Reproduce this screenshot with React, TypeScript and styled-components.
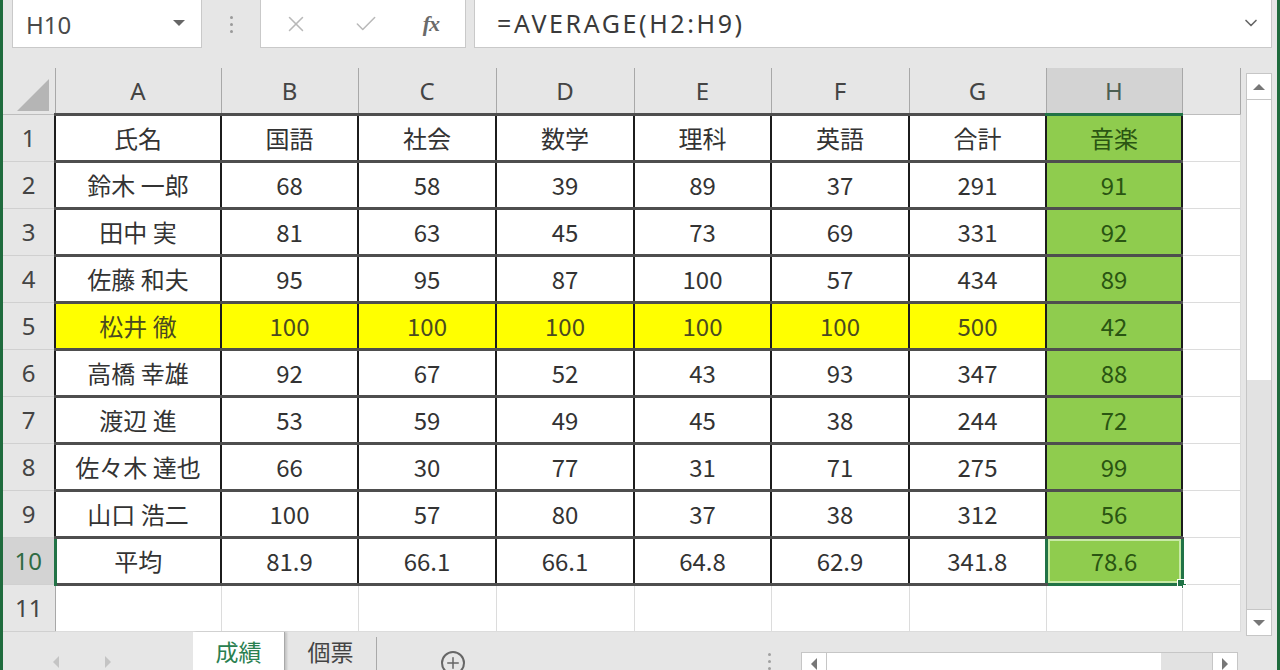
import * as React from 'react';
import styled, { createGlobalStyle, css } from 'styled-components';
import { X, Check, ChevronDown, Plus } from 'lucide-react';

type Tone = 'plain' | 'yellow' | 'green';

const COLS = ['A', 'B', 'C', 'D', 'E', 'F', 'G', 'H', ''];
const WIDTHS = [52, 166, 137, 138, 138, 137, 138, 137, 136, 58];

const DATA: (string | number)[][] = [
	[ '氏名', '国語', '社会', '数学', '理科', '英語', '合計', '音楽' ],
	[ '鈴木 一郎', 68, 58, 39, 89, 37, 291, 91 ],
	[ '田中 実', 81, 63, 45, 73, 69, 331, 92 ],
	[ '佐藤 和夫', 95, 95, 87, 100, 57, 434, 89 ],
	[ '松井 徹', 100, 100, 100, 100, 100, 500, 42 ],
	[ '高橋 幸雄', 92, 67, 52, 43, 93, 347, 88 ],
	[ '渡辺 進', 53, 59, 49, 45, 38, 244, 72 ],
	[ '佐々木 達也', 66, 30, 77, 31, 71, 275, 99 ],
	[ '山口 浩二', 100, 57, 80, 37, 38, 312, 56 ],
	[ '平均', '81.9', '66.1', '66.1', '64.8', '62.9', '341.8', '78.6' ]
];

const GlobalStyle = createGlobalStyle`
	html, body {
		margin: 0;
		padding: 0;
		background: #e6e6e6;
	}
	body {
		font-family: "Noto Sans CJK JP", "Noto Sans", sans-serif;
	}
`;

const App = () => {
	const toneOf = (row: number, col: number): Tone => {
		if (col === 7) return 'green';
		if (row === 4) return 'yellow';
		return 'plain';
	};

	return (
		<Window>
			<GlobalStyle />
			<FormulaRow>
				<NameBox>
					<span>H10</span>
					<DropArrow />
				</NameBox>
				<Grip>
					<i />
					<i />
					<i />
				</Grip>
				<ActionBox>
					<X size={26} strokeWidth={1.4} color="#b9b9b9" />
					<Check size={26} strokeWidth={1.4} color="#b9b9b9" />
					<Fx>fx</Fx>
				</ActionBox>
				<FormulaInput>
					<span>=AVERAGE(H2:H9)</span>
					<ChevronDown size={20} strokeWidth={2} color="#666" />
				</FormulaInput>
			</FormulaRow>

			<SheetRow>
				<Grid>
					<colgroup>
						{WIDTHS.map((w, i) => <col key={i} style={{ width: w }} />)}
					</colgroup>
					<tbody>
						<tr>
							<Corner>
								<Triangle />
							</Corner>
							{COLS.map((c, i) => (
								<ColHead key={i} $active={c === 'H'}>
									{c}
								</ColHead>
							))}
						</tr>
						{DATA.map((row, r) => (
							<tr key={r}>
								<RowHead $active={r === 9}>{r + 1}</RowHead>
								{row.map((v, c) => (
									<Cell key={c} $tone={toneOf(r, c)} $boxed $selected={r === 9 && c === 7}>
										{v}
										{r === 9 && c === 7 && <FillHandle />}
									</Cell>
								))}
								<Cell $tone="plain" />
							</tr>
						))}
						<tr>
							<RowHead>11</RowHead>
							{COLS.map((c, i) => <Cell key={i} $tone="plain" />)}
						</tr>
					</tbody>
				</Grid>
				<VScroll>
					<ScrollBtn>
						<ArrowUp />
					</ScrollBtn>
					<VThumb />
					<VTrack />
					<ScrollBtn>
						<ArrowDown />
					</ScrollBtn>
				</VScroll>
			</SheetRow>

			<TabBar>
				<TabNav>
					<NavArrow $dir="left" />
					<NavArrow $dir="right" />
				</TabNav>
				<Tab $active>成績</Tab>
				<Tab>個票</Tab>
				<AddSheet>
					<Plus size={18} strokeWidth={2} color="#666" />
				</AddSheet>
				<TabGrip>
					<i />
					<i />
					<i />
				</TabGrip>
				<HScroll>
					<HBtn>
						<NavArrow $dir="left" $dark />
					</HBtn>
					<HThumb />
					<HTrack />
					<HBtn>
						<NavArrow $dir="right" $dark />
					</HBtn>
				</HScroll>
			</TabBar>
		</Window>
	);
};

export default App;

const Window = styled.div`
	width: 1280px;
	height: 670px;
	box-sizing: border-box;
	overflow: hidden;
	background: #e6e6e6;
	border-left: 3px solid #1f6b3d;
	border-right: 3px solid #1f6b3d;
	display: flex;
	flex-direction: column;
`;

const FormulaRow = styled.div`
	height: 48px;
	margin-bottom: 20px;
	padding-left: 9px;
	padding-right: 5px;
	display: flex;
	flex-shrink: 0;
`;

const boxBase = css`
	background: #fff;
	border: 1px solid #c9c9c9;
	border-top: none;
	box-sizing: border-box;
`;

const NameBox = styled.div`
	${boxBase};
	width: 190px;
	display: flex;
	align-items: center;
	justify-content: space-between;
	padding: 2px 16px 0 13px;
	font-family: "Noto Sans", sans-serif;
	font-size: 24px;
	color: #4a4a4a;
`;

const DropArrow = styled.span`
	width: 0;
	height: 0;
	border-left: 6px solid transparent;
	border-right: 6px solid transparent;
	border-top: 6px solid #666;
	margin-top: -4px;
`;

const Grip = styled.div`
	width: 58px;
	display: flex;
	flex-direction: column;
	align-items: center;
	justify-content: center;
	gap: 4px;
	i {
		width: 3px;
		height: 3px;
		border-radius: 50%;
		background: #9a9a9a;
	}
`;

const ActionBox = styled.div`
	${boxBase};
	width: 206px;
	display: flex;
	align-items: center;
	justify-content: space-between;
	padding: 0 26px 0 22px;
`;

const Fx = styled.span`
	font-family: "Liberation Serif", serif;
	font-style: italic;
	font-weight: bold;
	font-size: 22px;
	color: #6a6a6a;
	letter-spacing: -1px;
`;

const FormulaInput = styled.div`
	${boxBase};
	flex: 1;
	margin-left: 8px;
	display: flex;
	align-items: center;
	justify-content: space-between;
	padding: 0 10px 2px 22px;
	font-family: "Noto Sans", sans-serif;
	font-size: 25px;
	letter-spacing: 2.6px;
	color: #3a3a3a;
`;

const SheetRow = styled.div`
	height: 564px;
	display: flex;
	flex-shrink: 0;
`;

const Grid = styled.table`
	width: 1237px;
	table-layout: fixed;
	border-collapse: collapse;
	align-self: flex-start;
	td {
		padding: 0;
		text-align: center;
		vertical-align: middle;
		overflow: hidden;
		white-space: nowrap;
	}
	tr {
		height: 47px;
	}
	tr:first-child {
		height: 46px;
	}
`;

const headBase = css`
	background: #e6e6e6;
	font-family: "Noto Sans", sans-serif;
	font-size: 24px;
	color: #444;
`;

const Corner = styled.td`
	${headBase};
	border-right: 1px solid #a8a8a8;
	border-bottom: 1px solid #bdbdbd;
`;

const Triangle = styled.div`
	width: 0;
	height: 0;
	margin: 8px 0 0 14px;
	border-left: 32px solid transparent;
	border-bottom: 32px solid #b5b5b5;
`;

const ColHead = styled.td<{ $active?: boolean }>`
	${headBase};
	border-right: 1px solid #a8a8a8;
	border-bottom: 1px solid #bdbdbd;
	${(p) =>
		p.$active &&
		css`
			background: #d3d3d3;
			color: #4d5f52;
			border-bottom: 3px solid #217346;
		`};
`;

const RowHead = styled.td<{ $active?: boolean }>`
	${headBase};
	border-right: 1px solid #a8a8a8;
	border-bottom: 1px solid #d0d0d0;
	${(p) =>
		p.$active &&
		css`
			background: #d3d3d3;
			color: #2f6b43;
			border-right: 3px solid #217346;
		`};
`;

const toneStyles: Record<Tone, ReturnType<typeof css>> = {
	plain: css`
		background: #fff;
		color: #333;
	`,
	yellow: css`
		background: #ffff00;
		color: #4a4a20;
	`,
	green: css`
		background: #8fcc4e;
		color: #2a5512;
	`
};

const Cell = styled.td<{ $tone: Tone; $boxed?: boolean; $selected?: boolean }>`
	${(p) => toneStyles[p.$tone]};
	font-size: 24px;
	border: 1px solid #dcdcdc;
	position: relative;
	${(p) =>
		p.$boxed &&
		css`
			border-left: 2px solid #1c1c1c;
			border-right: 2px solid #1c1c1c;
			border-top: 3px solid #4e4e4e;
			border-bottom: 3px solid #4e4e4e;
		`};
	${(p) =>
		p.$selected &&
		css`
			border: 3px solid #217346;
			box-shadow: inset 0 0 0 2px #c8eaa6;
			overflow: visible !important;
		`};
`;

const FillHandle = styled.span`
	position: absolute;
	right: -6px;
	bottom: -6px;
	width: 8px;
	height: 8px;
	background: #217346;
	border: 1px solid #fff;
`;

const VScroll = styled.div`
	width: 26px;
	margin-left: 5px;
	margin-top: 5px;
	height: 563px;
	display: flex;
	flex-direction: column;
	box-sizing: border-box;
`;

const ScrollBtn = styled.div`
	height: 27px;
	flex-shrink: 0;
	background: #fff;
	border: 1px solid #c6c6c6;
	box-sizing: border-box;
	display: flex;
	align-items: center;
	justify-content: center;
`;

const ArrowUp = styled.span`
	width: 0;
	height: 0;
	border-left: 6px solid transparent;
	border-right: 6px solid transparent;
	border-bottom: 6px solid #777;
`;

const ArrowDown = styled(ArrowUp)`
	border-bottom: none;
	border-top: 6px solid #777;
`;

const VThumb = styled.div`
	height: 280px;
	background: #fff;
	border-left: 1px solid #c6c6c6;
	border-right: 1px solid #c6c6c6;
`;

const VTrack = styled.div`
	flex: 1;
	background: #e2e2e2;
	border-left: 1px solid #c6c6c6;
	border-right: 1px solid #c6c6c6;
`;

const TabBar = styled.div`
	flex: 1;
	display: flex;
	align-items: stretch;
	padding-top: 5px;
`;

const TabNav = styled.div`
	width: 190px;
	display: flex;
	align-items: center;
	gap: 46px;
	padding: 12px 0 0 50px;
	box-sizing: border-box;
`;

const NavArrow = styled.span<{ $dir: 'left' | 'right'; $dark?: boolean }>`
	width: 0;
	height: 0;
	border-top: 6px solid transparent;
	border-bottom: 6px solid transparent;
	${(p) =>
		p.$dir === 'left'
			? css`border-right: 6px solid ${p.$dark ? '#777' : '#c4c4c4'};`
			: css`border-left: 6px solid ${p.$dark ? '#777' : '#c4c4c4'};`};
`;

const Tab = styled.div<{ $active?: boolean }>`
	width: 92px;
	box-sizing: border-box;
	padding-top: 2px;
	text-align: center;
	font-size: 23px;
	line-height: 24px;
	color: #444;
	border-right: 1px solid #a9a9a9;
	${(p) =>
		p.$active &&
		css`
			background: #fff;
			color: #2a8050;
			margin-top: -5px;
			padding-top: 7px;
			box-shadow: 2px 0 2px rgba(0, 0, 0, 0.15);
		`};
`;

const AddSheet = styled.div`
	margin-left: 64px;
	margin-top: 14px;
	width: 24px;
	height: 24px;
	border: 2px solid #666;
	border-radius: 50%;
	display: flex;
	align-items: center;
	justify-content: center;
	box-sizing: border-box;
`;

const TabGrip = styled.div`
	margin-left: 303px;
	padding-top: 16px;
	display: flex;
	flex-direction: column;
	gap: 4px;
	i {
		width: 3px;
		height: 3px;
		border-radius: 50%;
		background: #a0a0a0;
	}
`;

const HScroll = styled.div`
	margin-left: 30px;
	margin-top: 15px;
	width: 437px;
	display: flex;
	border: 1px solid #c6c6c6;
	border-bottom: none;
	box-sizing: border-box;
`;

const HBtn = styled.div`
	width: 24px;
	background: #fff;
	display: flex;
	align-items: center;
	justify-content: center;
	border-left: 1px solid #c6c6c6;
	&:first-child {
		border-left: none;
		border-right: 1px solid #c6c6c6;
	}
`;

const HThumb = styled.div`
	width: 334px;
	background: #fff;
`;

const HTrack = styled.div`
	flex: 1;
	background: #e2e2e2;
`;
